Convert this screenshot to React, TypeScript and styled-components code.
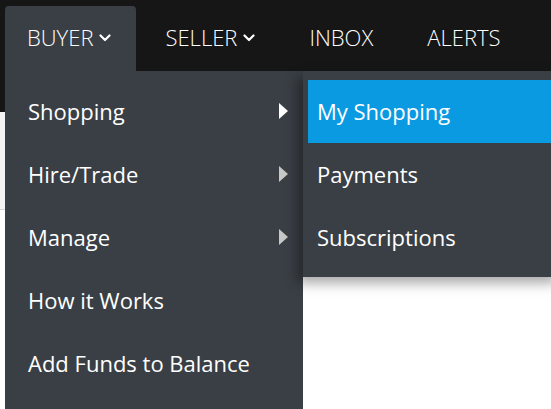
import React from "react";
import styled, { createGlobalStyle } from "styled-components";

const GlobalStyle = createGlobalStyle`
  html, body { margin: 0; padding: 0; background: #ffffff; }
  body { font-family: "Open Sans", "Liberation Sans", sans-serif; overflow: hidden; }
  * { box-sizing: border-box; }
`;

const Page = styled.div`
  position: relative;
  width: 551px;
  height: 409px;
  overflow: hidden;
  background: #ffffff;
`;

const TopBar = styled.nav`
  display: flex;
  align-items: flex-end;
  gap: 7px;
  height: 71px;
  padding-left: 5px;
  background: #161616;
`;

const NavItem = styled.div<{ $open?: boolean }>`
  display: flex;
  align-items: center;
  gap: 6px;
  height: 65px;
  padding: 0 25px 3px 22px;
  border-radius: 4px 4px 0 0;
  background: ${(p) => (p.$open ? "#3a3f45" : "transparent")};
  color: #ffffff;
  font-size: 22px;
  font-weight: 300;
`;

const SubBar = styled.div`
  height: 41px;
  background: #161616;
`;

const Hero = styled.div`
  height: 98px;
  background: #f4f4f4;
  border-bottom: 1px solid #d3d3d3;
`;

const Dropdown = styled.ul`
  position: absolute;
  top: 71px;
  left: 5px;
  width: 298px;
  bottom: 0;
  margin: 0;
  padding: 8px 0;
  list-style: none;
  background: #3a3f45;
`;

const MenuItem = styled.li`
  display: flex;
  align-items: center;
  justify-content: space-between;
  height: 63px;
  padding: 0 15px 0 23px;
  color: #ffffff;
  font-size: 22px;
`;

const Submenu = styled.ul`
  position: absolute;
  top: 71px;
  left: 303px;
  width: 260px;
  margin: 0;
  padding: 9px 0 8px 5px;
  list-style: none;
  background: #3a3f45;
  box-shadow: -6px 6px 12px rgba(0, 0, 0, 0.35);
`;

const SubItem = styled.li<{ $active?: boolean }>`
  display: flex;
  align-items: center;
  height: 63px;
  padding: 0 0 2px 9px;
  color: #ffffff;
  font-size: 22px;
  background: ${(p) => (p.$active ? "#0a9ae2" : "transparent")};
`;

const Chevron = () => (
  <svg width="12" height="8" viewBox="0 0 12 8" style={{ marginTop: 2 }}>
    <polyline points="1.5,1.5 6,6 10.5,1.5" fill="none" stroke="#ffffff" strokeWidth="2.2" strokeLinecap="round" strokeLinejoin="round" />
  </svg>
);

const Caret = ({ color }: { color: string }) => (
  <svg width="9" height="16" viewBox="0 0 9 16">
    <polygon points="0,0 9,8 0,16" fill={color} />
  </svg>
);

const menu = [
  { label: "Shopping", sub: true, active: true },
  { label: "Hire/Trade", sub: true },
  { label: "Manage", sub: true },
  { label: "How it Works" },
  { label: "Add Funds to Balance" },
];

const subItems = ["My Shopping", "Payments", "Subscriptions"];

export default function App() {
  return (
    <Page>
      <GlobalStyle />
      <TopBar>
        <NavItem $open>
          <span>BUYER</span>
          <Chevron />
        </NavItem>
        <NavItem>
          <span>SELLER</span>
          <Chevron />
        </NavItem>
        <NavItem>INBOX</NavItem>
        <NavItem>ALERTS</NavItem>
      </TopBar>
      <SubBar />
      <Hero />
      <Dropdown>
        {menu.map((m) => (
          <MenuItem key={m.label}>
            <span>{m.label}</span>
            {m.sub && <Caret color={m.active ? "#ffffff" : "#c8c8c8"} />}
          </MenuItem>
        ))}
      </Dropdown>
      <Submenu>
        {subItems.map((s, i) => (
          <SubItem key={s} $active={i === 0}>
            {s}
          </SubItem>
        ))}
      </Submenu>
    </Page>
  );
}
